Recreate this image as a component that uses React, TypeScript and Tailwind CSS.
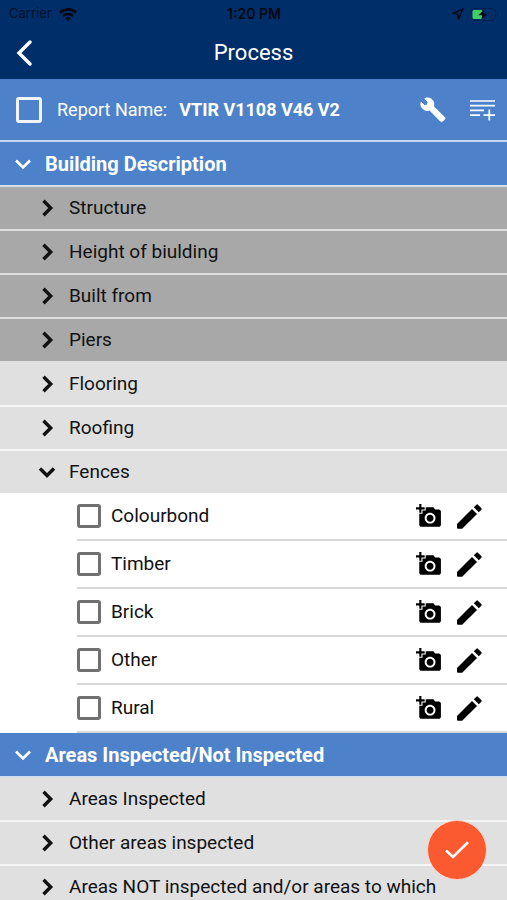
import { useState } from 'react';
import { MdAddAPhoto } from 'react-icons/md';

const BUILDING_ROWS = [
  { label: 'Structure', done: true },
  { label: 'Height of biulding', done: true },
  { label: 'Built from', done: true },
  { label: 'Piers', done: true },
  { label: 'Flooring', done: false },
  { label: 'Roofing', done: false },
];

const FENCES = ['Colourbond', 'Timber', 'Brick', 'Other', 'Rural'];

const AREA_ROWS = ['Areas Inspected', 'Other areas inspected', 'Areas NOT inspected and/or areas to which'];

function StatusBar() {
  return (
    <div className="grid h-7 grid-cols-3 items-center pl-[9px] pr-2 font-['Inter',sans-serif] text-[13px] text-[#02122c]">
      <div className="flex items-center gap-[7px]">
        <span>Carrier</span>
        <svg viewBox="0 0 18 13" className="h-[13px] w-[18px]" fill="none" stroke="#000814" strokeWidth="2.6">
          <path d="M1 4.7a11.4 11.4 0 0 1 16 0" />
          <path d="M4 8a7.2 7.2 0 0 1 10 0" />
          <path d="M9 13 6.3 10.2a3.9 3.9 0 0 1 5.4 0Z" fill="#000814" stroke="none" />
        </svg>
      </div>
      <span className="text-center text-sm font-semibold text-[#000814]">1:20 PM</span>
      <div className="flex items-center justify-end gap-[7px]">
        <svg viewBox="0 0 12 12" className="size-3" fill="none" stroke="#000814" strokeWidth="1.4" strokeLinejoin="round">
          <path d="M11 1 1 5.4l4.8.8.8 4.8Z" />
        </svg>
        <svg viewBox="0 0 28 13" className="h-[13px] w-7">
          <rect x=".5" y=".5" width="24" height="12" rx="3.5" fill="none" stroke="#02204d" />
          <path d="M26 4.5v4c1.6-.6 1.6-3.4 0-4Z" fill="#02204d" />
          <rect x="1.5" y="2" width="10" height="9" rx="1.5" fill="#3ecf67" />
          <path d="M13.5 1.5 7.3 7.3h4l-1 4.2 6.2-5.8h-4Z" fill="#000814" />
        </svg>
      </div>
    </div>
  );
}

function Chevron({ open, className }: { open: boolean; className: string }) {
  return (
    <svg viewBox="0 0 18 18" className={`size-[18px] shrink-0 ${className}`} fill="none" stroke="currentColor">
      <path d={open ? 'M2 5.5 9 12.5 16 5.5' : 'M5.5 1.8 12.7 9 5.5 16.2'} />
    </svg>
  );
}

function WrenchIcon() {
  return (
    <svg viewBox="0 0 26 26" className="size-[26px]" fill="currentColor" stroke="currentColor" strokeWidth="1" strokeLinejoin="round">
      <path d="M1.2 5.2 4.6 8.6 7.4 8 8.2 5 4.8 1.6C8 .2 11.5 1.2 13 4c.9 1.7 1 3.6.4 5.2L24.5 20.3c.6.6.6 1.3 0 1.9l-2 2c-.6.6-1.3.6-1.9 0L9.6 13.1C7.600 13.8 5.500 13.500 3.700 12.300 1.300 10.700.3 7.900 1.200 5.200Z" />
    </svg>
  );
}

function PencilIcon() {
  return (
    <svg viewBox="0 0 25 25" className="size-[25px]" fill="currentColor">
      <path d="M0 20 15 5 20 10 5.2 24.7H1Q0 24.700 0 23.700Z" />
      <path d="M16.800 3.200 19.300.7Q20.100 0 20.900.7L24.300 4.100Q25 4.900 24.300 5.700L21.800 8.200Z" />
    </svg>
  );
}

function SectionHeader({ title }: { title: string }) {
  return (
    <button className="flex h-[45px] w-full items-center gap-[13px] border-b-2 border-[#d3deed] bg-[#4d82cb] pl-3.5 text-left text-[20px] font-bold text-white">
      <Chevron open className="stroke-[2.6]" />
      {title}
    </button>
  );
}

function Row({ label, done = false }: { label: string; done?: boolean }) {
  return (
    <button
      className={`flex h-11 w-full items-center gap-[13px] whitespace-nowrap border-b-2 pl-[38px] text-left ${done ? 'border-[#dedede] bg-[#a8a8a8]' : 'border-[#f6f6f6] bg-[#e0e0e0]'}`}
    >
      <Chevron open={false} className="stroke-[3.4]" />
      {label}
    </button>
  );
}

function CheckItem({ label }: { label: string }) {
  const [checked, setChecked] = useState(false);
  return (
    <div className="ml-[77px] flex h-12 items-center border-b-2 border-[#d9d9d9] pr-[25px]">
      <label className="flex flex-1 items-center gap-2.5">
        <input
          type="checkbox"
          checked={checked}
          onChange={() => setChecked(!checked)}
          className="size-6 appearance-none rounded-[3px] border-[3px] border-[#707070] checked:bg-[#666]"
        />
        {label}
      </label>
      <button aria-label={`Add photo to ${label}`} className="text-black">
        <MdAddAPhoto className="size-[26px]" />
      </button>
      <button aria-label={`Edit ${label}`} className="ml-[15px] text-black">
        <PencilIcon />
      </button>
    </div>
  );
}

export default function App() {
  return (
    <div className="min-h-screen bg-white font-['Roboto',sans-serif] text-[19px] text-[#111]">
      <header className="bg-[#002e69]">
        <StatusBar />
        <div className="grid h-[51px] grid-cols-[1fr_auto_1fr] items-center pb-0.5 text-white">
          <button aria-label="Back" className="justify-self-start pl-4">
            <svg viewBox="0 0 16 26" className="h-[26px] w-4" fill="none" stroke="currentColor" strokeWidth="3.4" strokeLinecap="round">
              <path d="M14 2 3 13 14 24" />
            </svg>
          </button>
          <h1 className="text-[22px]">Process</h1>
        </div>
      </header>

      <div className="flex h-[63px] items-center border-b-2 border-[#c5d6ee] bg-[#4d82cb] pl-4 pr-3 text-white">
        <label className="flex flex-1 items-center text-lg">
          <input type="checkbox" className="size-[26px] appearance-none rounded-[3px] border-[3px] border-[#f1f5fb] checked:bg-white" />
          <span className="ml-[15px]">Report Name:</span>
          <strong className="ml-3 font-bold">VTIR V1108 V46 V2</strong>
        </label>
        <button aria-label="Tools">
          <WrenchIcon />
        </button>
        <button aria-label="Add section" className="ml-6">
          <svg viewBox="0 0 25 22" className="h-[22px] w-[25px]" fill="none" stroke="currentColor" strokeWidth="1.7">
            <path d="M0 2h25M0 6.7h25M0 11.4h14M0 16.1h10M13.5 16.1h11.500M19.3 10.5v11" />
          </svg>
        </button>
      </div>

      <main>
        <SectionHeader title="Building Description" />
        {BUILDING_ROWS.map((row) => (
          <Row key={row.label} label={row.label} done={row.done} />
        ))}
        <button className="flex h-[42px] w-full items-center gap-[13px] bg-[#e0e0e0] pl-[38px] text-left">
          <Chevron open className="stroke-[3.4]" />
          Fences
        </button>
        {FENCES.map((label) => (
          <CheckItem key={label} label={label} />
        ))}
        <SectionHeader title="Areas Inspected/Not Inspected" />
        {AREA_ROWS.map((label) => (
          <Row key={label} label={label} />
        ))}
      </main>

      <button
        aria-label="Save"
        className="fixed bottom-5 right-5 flex size-[60px] items-center justify-center rounded-full border border-[#fbd5c8] bg-[#fb5930] text-white"
      >
        <svg viewBox="0 0 24 18" className="h-[18px] w-6" fill="none" stroke="currentColor" strokeWidth="2.6">
          <path d="M1 9.5 8 16 23 1.2" />
        </svg>
      </button>
    </div>
  );
}
